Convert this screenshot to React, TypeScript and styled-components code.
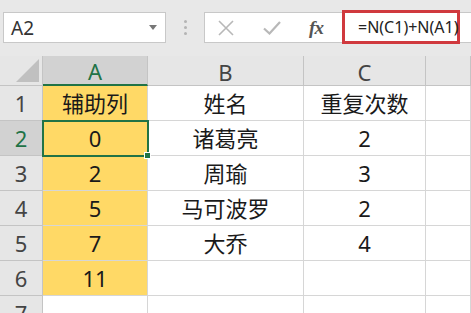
import React from 'react';
import styled, { createGlobalStyle } from 'styled-components';

const GlobalStyle = createGlobalStyle`
  html, body {
    margin: 0;
    padding: 0;
    background: #ffffff;
    overflow: hidden;
  }
  body {
    font-family: "Noto Sans", "Noto Sans CJK SC", sans-serif;
  }
`;

const Page = styled.div`
  width: 471px;
  height: 313px;
  overflow: hidden;
  background: #ffffff;
`;

const TopBar = styled.div`
  height: 56px;
  background: #e8e8e8;
  display: flex;
  align-items: flex-start;
  padding-top: 12px;
  box-sizing: border-box;
`;

const NameBox = styled.div`
  margin-left: 3px;
  width: 163px;
  height: 31px;
  box-sizing: border-box;
  background: #ffffff;
  border: 1px solid #c8c8c8;
  display: flex;
  align-items: center;
  justify-content: space-between;
  padding: 0 8px 0 7px;
  font-size: 19px;
  color: #333;
`;

const DropArrow = styled.span`
  width: 0;
  height: 0;
  border-left: 4px solid transparent;
  border-right: 4px solid transparent;
  border-top: 5px solid #777;
`;

const Dots = styled.div`
  width: 38px;
  flex-shrink: 0;
  height: 31px;
  display: flex;
  flex-direction: column;
  align-items: center;
  justify-content: center;
  gap: 3px;

  span {
    width: 3px;
    height: 3px;
    border-radius: 50%;
    background: #b4b4b4;
  }
`;

const FormulaBox = styled.div`
  flex: 1;
  height: 31px;
  box-sizing: border-box;
  background: #ffffff;
  border: 1px solid #c8c8c8;
  border-right: none;
  display: flex;
  align-items: center;
`;

const ToolIcon = styled.div<{ $w: number }>`
  width: ${(p) => p.$w}px;
  flex-shrink: 0;
  display: flex;
  align-items: center;
  justify-content: center;
`;

const Fx = styled.span`
  font-family: "Liberation Serif", "DejaVu Serif", serif;
  font-style: italic;
  font-weight: bold;
  font-size: 19px;
  color: #555;
  letter-spacing: -1px;
`;

const FormulaText = styled.div`
  margin-left: 7px;
  height: 34px;
  width: 118px;
  flex-shrink: 0;
  box-sizing: border-box;
  margin-top: -3px;
  margin-bottom: -1px;
  border: 3px solid #d0393e;
  display: flex;
  align-items: center;
  padding-left: 13px;
  font-size: 16px;
  color: #222;
  white-space: nowrap;
`;

const Grid = styled.div`
  display: grid;
  grid-template-columns: 43px 105px 156px 122px 1fr;
  grid-template-rows: 30px repeat(7, 35px);
  position: relative;
`;

const Cell = styled.div<{ $bg?: string; $head?: boolean; $sel?: boolean }>`
  box-sizing: border-box;
  display: flex;
  align-items: center;
  justify-content: center;
  background: ${(p) => p.$bg || (p.$head ? (p.$sel ? '#d2d2d2' : '#e6e6e6') : '#ffffff')};
  border-right: 1px solid ${(p) => (p.$head ? '#c4c4c4' : '#d6d6d6')};
  border-bottom: 1px solid ${(p) => (p.$head ? '#c4c4c4' : '#d6d6d6')};
  font-size: 22px;
  color: ${(p) => (p.$head ? (p.$sel ? '#217346' : '#444') : '#1a1a1a')};
  line-height: 1;
`;

const ColHead = styled(Cell)<{ $sel?: boolean }>`
  border-bottom: ${(p) => (p.$sel ? '2px solid #217346' : '1px solid #c4c4c4')};
  padding-top: 2px;
`;

const Corner = styled.div`
  background: #e6e6e6;
  border-right: 1px solid #c4c4c4;
  border-bottom: 1px solid #c4c4c4;
  box-sizing: border-box;
  display: flex;
  align-items: flex-end;
  justify-content: flex-end;
  padding: 0 3px 3px 0;

  span {
    width: 0;
    height: 0;
    border-left: 23px solid transparent;
    border-bottom: 23px solid #c0c0c0;
  }
`;

const Selection = styled.div`
  position: absolute;
  left: 42px;
  top: 64px;
  width: 107px;
  height: 37px;
  box-sizing: border-box;
  border: 2px solid #217346;
  pointer-events: none;

  &::after {
    content: '';
    position: absolute;
    right: -4px;
    bottom: -4px;
    width: 5px;
    height: 5px;
    background: #217346;
    border: 1px solid #ffffff;
  }
`;

const YELLOW = '#ffd966';

const rows: [string, string, string][] = [
  ['辅助列', '姓名', '重复次数'],
  ['0', '诸葛亮', '2'],
  ['2', '周瑜', '3'],
  ['5', '马可波罗', '2'],
  ['7', '大乔', '4'],
  ['11', '', ''],
  ['', '', ''],
];

const App: React.FC = () => {
  return (
    <Page>
      <GlobalStyle />
      <TopBar>
        <NameBox>
          A2
          <DropArrow />
        </NameBox>
        <Dots>
          <span />
          <span />
          <span />
        </Dots>
        <FormulaBox>
          <ToolIcon $w={42}>
            <svg width="16" height="16" viewBox="0 0 16 16">
              <path d="M1 1 L15 15 M15 1 L1 15" stroke="#b8b8b8" strokeWidth="1.6" fill="none" />
            </svg>
          </ToolIcon>
          <ToolIcon $w={50}>
            <svg width="18" height="14" viewBox="0 0 18 14">
              <path d="M1 7.5 L6.5 12.5 L17 1" stroke="#b8b8b8" strokeWidth="2.2" fill="none" />
            </svg>
          </ToolIcon>
          <ToolIcon $w={38}>
            <Fx>fx</Fx>
          </ToolIcon>
          <FormulaText>=N(C1)+N(A1)</FormulaText>
        </FormulaBox>
      </TopBar>
      <Grid>
        <Corner>
          <span />
        </Corner>
        <ColHead $head $sel>A</ColHead>
        <ColHead $head>B</ColHead>
        <ColHead $head>C</ColHead>
        <ColHead $head />
        {rows.map((r, i) => (
          <React.Fragment key={i}>
            <Cell $head $sel={i === 1}>{i + 1}</Cell>
            <Cell $bg={i < 6 ? YELLOW : undefined}>{r[0]}</Cell>
            <Cell>{r[1]}</Cell>
            <Cell>{r[2]}</Cell>
            <Cell />
          </React.Fragment>
        ))}
        <Selection />
      </Grid>
    </Page>
  );
};

export default App;
